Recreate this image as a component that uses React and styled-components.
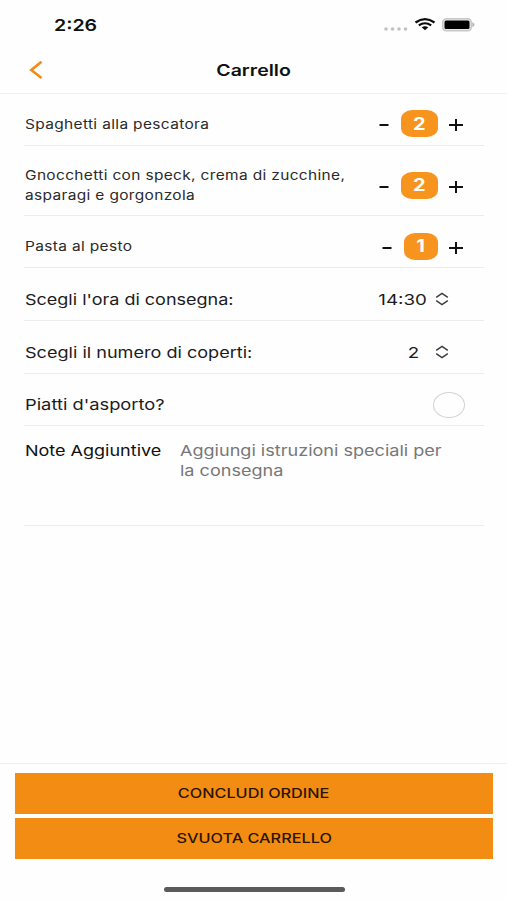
import React from "react";
import styled, { createGlobalStyle } from "styled-components";

const GlobalStyle = createGlobalStyle`
  * { box-sizing: border-box; }
  body { margin: 0; background: #fefefe; font-family: Inter, "Liberation Sans", sans-serif; }
`;

const Screen = styled.main`
  display: flex;
  flex-direction: column;
  width: 507px;
  height: 900px;
  overflow: hidden;
  background: #fefefe;
`;

/* Wide lettering: regular glyphs stretched along the x axis. */
const Label = styled.span`
  display: block;
  flex: none;
  white-space: pre;
  font-size: ${(p) => p.$size}px;
  font-weight: ${(p) => p.$weight || 400};
  line-height: ${(p) => p.$line || 20}px;
  letter-spacing: ${(p) => p.$spacing || 0}px;
  color: ${(p) => p.$color || "#1c1c1c"};
  transform: scaleX(${(p) => p.$stretch || 1.25});
  transform-origin: ${(p) => p.$origin || "left"} center;
`;

const StatusBar = styled.div`
  display: flex;
  justify-content: space-between;
  height: 47px;
  padding: 14.5px 32px 0 54px;
`;

const StatusIcons = styled.div`
  display: flex;
  align-items: flex-start;
`;

const NavBar = styled.header`
  display: grid;
  grid-template-columns: 60px 1fr 60px;
  align-items: center;
  height: 47px;
  border-bottom: 1.5px solid #efefef;
`;

const BackButton = styled.button`
  display: flex;
  padding: 0 0 0 28px;
  border: 0;
  background: none;
`;

const Title = styled.h1`
  display: flex;
  justify-content: center;
  margin: 0;
`;

const List = styled.section`
  flex: 1;
  padding: 0 23px 0 24px;
`;

const Row = styled.div`
  display: flex;
  align-items: center;
  justify-content: space-between;
  height: ${(p) => p.$height}px;
  padding: ${(p) => p.$top}px 0 0 0.6px;
  border-bottom: 1px solid #ececec;
`;

const NotesRow = styled.div`
  display: grid;
  grid-template-columns: 155.500px 1fr;
  align-items: start;
  height: 100px;
  padding: 15px 0 0 0.6px;
  border-bottom: 1px solid #ececec;
`;

const Stepper = styled.div`
  display: flex;
  align-items: center;
  margin-right: 21px;
`;

const Badge = styled.div`
  display: flex;
  align-items: center;
  justify-content: center;
  width: ${(p) => p.$width}px;
  height: 27px;
  margin: 0 11px 0 12px;
  border-radius: 11px / 9px;
  background: #f7941e;
`;

const StepIcon = styled.svg`
  display: block;
  margin-top: 3px;
`;

const Picker = styled.div`
  display: flex;
  align-items: center;
  gap: ${(p) => p.$gap}px;
  padding-right: 35px;
`;

const SortIcon = styled.svg`
  display: block;
  margin-bottom: 1px;
`;

const Radio = styled.span`
  width: 32px;
  height: 26px;
  margin: 0 19px 1px 0;
  border: 1.5px solid #d2d2d2;
  border-radius: 50%;
`;

const Footer = styled.footer`
  display: flex;
  flex-direction: column;
  align-items: center;
  gap: 4px;
  height: 137px;
  padding: 8.500px 14px 0 15px;
  border-top: 1.5px solid #efefef;
`;

const Action = styled.button`
  display: flex;
  align-items: center;
  justify-content: center;
  width: 100%;
  height: 41px;
  padding: 0;
  border: 0;
  background: #f38c12;
  font-family: inherit;
`;

const HomeIndicator = styled.div`
  width: 181px;
  height: 5px;
  margin-top: 24.500px;
  border-radius: 3px;
  background: #5b5b5b;
`;

const dishes = [
  { name: "Spaghetti alla pescatora", count: 2, height: 52, top: 8 },
  { name: "Gnocchetti con speck, crema di zucchine,\nasparagi e gorgonzola", count: 2, height: 70, top: 9 },
  { name: "Pasta al pesto", count: 1, height: 52, top: 9 },
];

function Quantity({ value }) {
  return (
    <Stepper>
      <StepIcon width="10" height="4"><path d="M.5 2h9" stroke="#111" strokeWidth="2" /></StepIcon>
      <Badge $width={value === 1 ? 34 : 37}>
        <Label $size={17} $weight={700} $color="#fff" $stretch={1.18} $origin="center">{value}</Label>
      </Badge>
      <StepIcon width="14" height="14"><path d="M0 7h14M7 1v12" stroke="#111" strokeWidth="2" /></StepIcon>
    </Stepper>
  );
}

function Sort() {
  return (
    <SortIcon width="14" height="14" viewBox="0 0 14 14" fill="none" stroke="#3c3c3c" strokeWidth="1.5">
      <path d="M1.2 5.4 7 1.5l5.8 3.9M1.2 8.6 7 12.5l5.8-3.9" />
    </SortIcon>
  );
}

export default function App() {
  return (
    <>
      <GlobalStyle />
      <Screen>
        <StatusBar>
          <Label $size={16.5} $weight={600} $color="#111" $stretch={1.185}>2:26</Label>
          <StatusIcons>
            <svg width="91" height="20" viewBox="0 0 91 20">
              <g fill="#c2c2c2">
                <circle cx="2" cy="14" r="1.8" /><circle cx="8.5" cy="14" r="1.8" />
                <circle cx="15" cy="14" r="1.8" /><circle cx="21.5" cy="14" r="1.8" />
              </g>
              <g fill="none" stroke="#0a0a0a" strokeWidth="2.2">
                <path d="M31.5 7.5Q41 .8 50.500 7.500" />
                <path d="M34.8 10.3Q41 6.2 47.200 10.300" />
              </g>
              <path d="M37.7 12.3Q41 10.2 44.300 12.300L41 15.200Z" fill="#0a0a0a" />
              <rect x="58.7" y="3.7" width="28.600" height="12" rx="3.5" fill="#e8e8e8" stroke="#c8c8c8" strokeWidth="1.5" />
              <rect x="60.5" y="5.5" width="25" height="8.600" rx="1.500" fill="#000" />
              <path d="M88.300 7Q92.800 9.700 88.300 12.200Z" fill="#b5b5b5" />
            </svg>
          </StatusIcons>
        </StatusBar>
        <NavBar>
          <BackButton aria-label="Indietro">
            <svg width="16" height="20" viewBox="0 0 16 20" fill="none" stroke="#f28a14" strokeWidth="2.6">
              <path d="M13.5 1.800 3.300 9.900l10.200 8" />
            </svg>
          </BackButton>
          <Title><Label $size={16} $weight={600} $color="#111" $origin="center" $stretch={1.22}>Carrello</Label></Title>
        </NavBar>
        <List>
          {dishes.map((d) => (
            <Row key={d.name} $height={d.height} $top={d.top}>
              <Label $size={13} $color="#2a2a2a" $spacing={0.3} $stretch={1.188}>{d.name}</Label>
              <Quantity value={d.count} />
            </Row>
          ))}
          <Row $height={53} $top={11}>
            <Label $size={15} $stretch={1.2}>Scegli l'ora di consegna:</Label>
            <Picker $gap={8}>
              <Label $size={15} $origin="right">14:30</Label>
              <Sort />
            </Picker>
          </Row>
          <Row $height={53} $top={11}>
            <Label $size={15} $stretch={1.205}>Scegli il numero di coperti:</Label>
            <Picker $gap={16}>
              <Label $size={15} $origin="right">2</Label>
              <Sort />
            </Picker>
          </Row>
          <Row $height={52} $top={11}>
            <Label $size={15} $stretch={1.22}>Piatti d'asporto?</Label>
            <Radio />
          </Row>
          <NotesRow>
            <Label $size={15} $color="#111" $stretch={1.2}>Note Aggiuntive</Label>
            <Label $size={15} $color="#777" $stretch={1.204}>{"Aggiungi istruzioni speciali per\nla consegna"}</Label>
          </NotesRow>
        </List>
        <Footer>
          <Action><Label $size={13} $weight={500} $color="#2b1403" $origin="center">CONCLUDI ORDINE</Label></Action>
          <Action><Label $size={13} $weight={500} $color="#2b1403" $origin="center">SVUOTA CARRELLO</Label></Action>
          <HomeIndicator />
        </Footer>
      </Screen>
    </>
  );
}
